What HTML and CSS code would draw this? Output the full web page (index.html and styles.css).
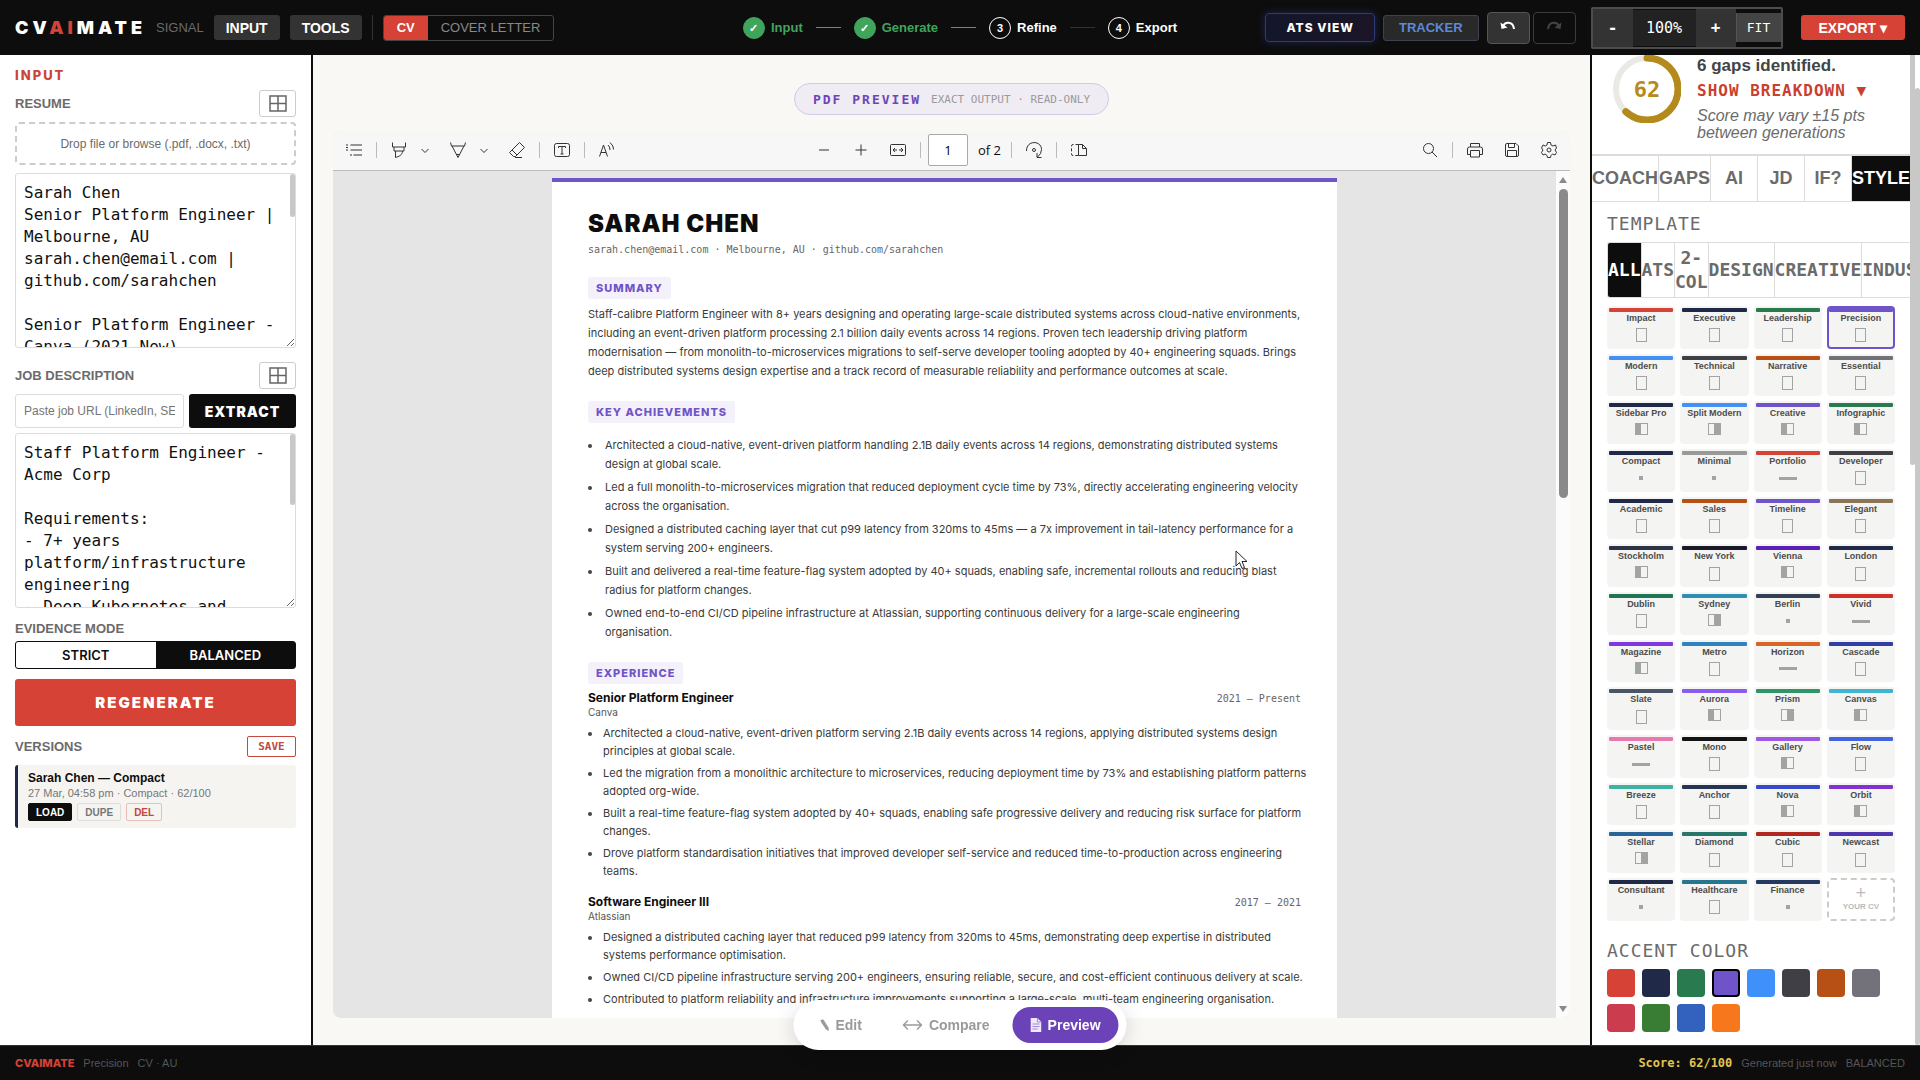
FILE: index.html
```
<!DOCTYPE html>
<html lang="en">
<head>
    <meta charset="UTF-8">
    <meta name="viewport" content="width=device-width, initial-scale=1.0">
    <title>CVAIMATE</title>
    <link rel="stylesheet" href="styles.css">
</head>
<body>
<header class="topbar">
    <div class="topbar-left">
        <div class="logo">CV<span>AI</span>MATE</div>
        <span class="signal">SIGNAL</span>
        <button class="top-btn">INPUT</button>
        <button class="top-btn">TOOLS</button>
        <span class="top-divider"></span>
        <div class="doc-toggle">
            <button class="active">CV</button>
            <button>COVER LETTER</button>
        </div>
    </div>
    <ol class="steps">
        <li class="step done"><span class="dot">✓</span>Input</li>
        <li class="step-line done"></li>
        <li class="step done"><span class="dot">✓</span>Generate</li>
        <li class="step-line done"></li>
        <li class="step"><span class="dot">3</span>Refine</li>
        <li class="step-line"></li>
        <li class="step"><span class="dot">4</span>Export</li>
    </ol>
    <div class="topbar-right">
        <button class="ats-btn">ATS VIEW</button>
        <button class="tracker-btn">TRACKER</button>
        <div class="history">
            <button aria-label="Undo"><svg width="18" height="12" viewBox="0 0 18 12"><path d="M4 6 C6 1.5 14 1 15 9" fill="none" stroke="currentColor" stroke-width="2"/><path d="M1.500 2.500 L2.500 9 L8.500 7.500 Z" fill="currentColor"/></svg></button>
            <button aria-label="Redo" disabled><svg width="18" height="12" viewBox="0 0 18 12"><path d="M14 6 C12 1.500 4 1 3 9" fill="none" stroke="currentColor" stroke-width="2"/><path d="M16.500 2.500 L15.500 9 L9.500 7.500 Z" fill="currentColor"/></svg></button>
        </div>
        <div class="zoom">
            <button>-</button>
            <span class="zoom-value">100%</span>
            <button>+</button>
            <button class="fit">FIT</button>
        </div>
        <button class="export-btn">EXPORT ▾</button>
    </div>
</header>

<main class="workspace">
    <aside class="input-panel">
        <h2 class="panel-title">INPUT</h2>
        <div class="field-head">
            <label for="resume">RESUME</label>
            <button class="grid-btn" aria-label="Expand resume"><svg width="18" height="17" viewBox="0 0 18 17"><path d="M1 1H17V16H1ZM9 1V16M1 8.500H17" fill="none" stroke="currentColor" stroke-width="1.500"/></svg></button>
        </div>
        <button class="dropzone">Drop file or browse (.pdf, .docx, .txt)</button>
        <div class="text-wrap">
            <textarea id="resume">Sarah Chen
Senior Platform Engineer | Melbourne, AU
sarah.chen@email.com | github.com/sarahchen

Senior Platform Engineer - Canva (2021-Now)</textarea>
            <span class="thumb thumb-short"></span>
        </div>
        <div class="field-head field-head-job">
            <label for="job">JOB DESCRIPTION</label>
            <button class="grid-btn" aria-label="Expand job description"><svg width="18" height="17" viewBox="0 0 18 17"><path d="M1 1H17V16H1ZM9 1V16M1 8.500H17" fill="none" stroke="currentColor" stroke-width="1.500"/></svg></button>
        </div>
        <div class="url-row">
            <input type="text" aria-label="Job URL" placeholder="Paste job URL (LinkedIn, SEEK)">
            <button>EXTRACT</button>
        </div>
        <div class="text-wrap">
            <textarea id="job">Staff Platform Engineer - Acme Corp

Requirements:
- 7+ years platform/infrastructure engineering
- Deep Kubernetes and distributed systems</textarea>
            <span class="thumb thumb-long"></span>
        </div>
        <h3 class="label evidence-label">EVIDENCE MODE</h3>
        <div class="evidence">
            <button>STRICT</button>
            <button class="active">BALANCED</button>
        </div>
        <button class="regenerate">REGENERATE</button>
        <div class="versions-head">
            <h3 class="label">VERSIONS</h3>
            <button class="save-btn">SAVE</button>
        </div>
        <div class="version">
            <div class="version-name">Sarah Chen — Compact</div>
            <div class="version-meta">27 Mar, 04:58 pm · Compact · 62/100</div>
            <div class="version-actions">
                <button class="load">LOAD</button>
                <button>DUPE</button>
                <button class="del">DEL</button>
            </div>
        </div>
    </aside>

    <section class="preview">
        <div class="preview-pill">PDF PREVIEW <span>EXACT OUTPUT · READ-ONLY</span></div>
        <div class="viewer">
            <div class="pdf-toolbar">
                <div class="tools">
                    <button aria-label="Contents"><svg viewBox="0 0 16 16"><path d="M4.500 3H16M4.500 8H16M7.500 13H16M0 3H2M0 8H2M4 13H6M0 5.500H2"/></svg></button>
                    <span class="sep"></span>
                    <button aria-label="Highlight"><svg viewBox="0 0 16 16"><path d="M1.500 0.500V5H14.500V0.500M3 5V9H13V5M4.500 9V15.500C8 14.500 11.500 13 11.500 9"/></svg></button>
                    <button class="chev" aria-label="Highlight colours"><svg viewBox="0 0 8 16"><path d="M0.500 7L4 10.500L7.500 7"/></svg></button>
                    <button aria-label="Draw"><svg viewBox="0 0 16 16"><path d="M0.500 0.500L1.500 4H14.500L15.500 0.500M2 4L8 15.500L14 4M6.500 12.500H9.500"/></svg></button>
                    <button class="chev" aria-label="Pen options"><svg viewBox="0 0 8 16"><path d="M0.500 7L4 10.500L7.500 7"/></svg></button>
                    <button aria-label="Erase"><svg viewBox="0 0 16 16"><path d="M10.500 0.500L15.500 5.500L6.500 14.500H4.500L0.500 10.500ZM3 8L8 13M6 15.500H13"/></svg></button>
                    <span class="sep"></span>
                    <button aria-label="Add text"><svg viewBox="0 0 16 16"><rect x="0.500" y="1.500" width="15" height="13" rx="2"/><path d="M4.500 6V4.500H11.500V6M8 4.500V12M6.500 12H9.500"/></svg></button>
                    <span class="sep"></span>
                    <button aria-label="Read aloud"><svg viewBox="0 0 16 16"><path d="M0.500 14.500L4.500 3L8.500 14.500M2 10.500H7M9 3Q11 4.500 11 8M11 0.500Q15 4 14.500 7.500"/></svg></button>
                </div>
                <div class="tools">
                    <button aria-label="Zoom out"><svg viewBox="0 0 16 16"><path d="M3 8H13"/></svg></button>
                    <button aria-label="Zoom in"><svg viewBox="0 0 16 16"><path d="M2.500 8H13.500M8 2.500V13.500"/></svg></button>
                    <button aria-label="Fit width"><svg viewBox="0 0 16 16"><rect x="0.500" y="2.500" width="15" height="11" rx="1"/><path d="M3 8H7M9 8H13M5 6L3 8L5 10M11 6L13 8L11 10"/></svg></button>
                    <span class="sep"></span>
                    <input class="page-input" type="text" value="1" aria-label="Page">
                    <span class="page-total">of 2</span>
                    <span class="sep"></span>
                    <button aria-label="Rotate"><svg viewBox="0 0 16 16"><path d="M0.500 9C0 -2 15.500 -2 15.500 7.500Q15.500 12 11.500 15M11 11V15.500H15.500"/><circle cx="8" cy="8" r="1.500"/></svg></button>
                    <span class="sep"></span>
                    <button aria-label="Page view"><svg viewBox="0 0 16 16"><path d="M7.500 2.500H11.500L15.500 6.500V13.500H7.500ZM11.500 2.500V6.500H15.500"/><path d="M7.500 2.500H2Q0.500 2.500 0.500 4V12Q0.500 13.500 2 13.500H7.500" stroke-dasharray="3 2"/></svg></button>
                </div>
                <div class="tools tools-right">
                    <button aria-label="Search"><svg viewBox="0 0 16 16"><circle cx="6.500" cy="6.500" r="5"/><path d="M10 10L15 15"/></svg></button>
                    <span class="sep"></span>
                    <button aria-label="Print"><svg viewBox="0 0 16 16"><path d="M3.500 5V1.500H12.500V5M3.500 12.500H0.500V7Q0.500 5 2.500 5H13.500Q15.500 5 15.500 7V12.500H12.500M3.500 8.500H12.500V15H3.500Z"/></svg></button>
                    <button aria-label="Save"><svg viewBox="0 0 16 16"><path d="M1.500 3Q1.500 1.500 3 1.500H12L14.500 4V13Q14.500 14.500 13 14.500H3Q1.500 14.500 1.500 13ZM4.500 1.500V5.500H10.500V1.500M3.500 14.500V8.500H12.500V14.500"/></svg></button>
                    <button aria-label="Settings"><svg viewBox="0 0 16 16"><path d="M6.500 0.500H9.500L10 3L12 4L14.500 3L15.500 6L14 8L15.500 10.500L14 13L11.500 12L10 13.500L9.500 15.500H6.500L6 13.500L4 12L2 13L0.500 10.500L2 8L0.500 6L2 3L4.500 4L6 3Z"/><circle cx="8" cy="8" r="2"/></svg></button>
                </div>
            </div>
            <div class="pdf-body">
                <article class="page">
                    <h1>SARAH CHEN</h1>
                    <p class="contact">sarah.chen@email.com · Melbourne, AU · github.com/sarahchen</p>
                    <h2>SUMMARY</h2>
                    <p class="summary">Staff-calibre Platform Engineer with 8+ years designing and operating large-scale distributed systems across cloud-native environments, including an event-driven platform processing 2.1 billion daily events across 14 regions. Proven tech leadership driving platform modernisation — from monolith-to-microservices migrations to self-serve developer tooling adopted by 40+ engineering squads. Brings deep distributed systems design expertise and a track record of measurable reliability and performance outcomes at scale.</p>
                    <h2>KEY ACHIEVEMENTS</h2>
                    <ul class="achievements">
                        <li>Architected a cloud-native, event-driven platform handling 2.1B daily events across 14 regions, demonstrating distributed systems design at global scale.</li>
                        <li>Led a full monolith-to-microservices migration that reduced deployment cycle time by 73%, directly accelerating engineering velocity across the organisation.</li>
                        <li>Designed a distributed caching layer that cut p99 latency from 320ms to 45ms — a 7x improvement in tail-latency performance for a system serving 200+ engineers.</li>
                        <li>Built and delivered a real-time feature-flag system adopted by 40+ squads, enabling safe, incremental rollouts and reducing blast radius for platform changes.</li>
                        <li>Owned end-to-end CI/CD pipeline infrastructure at Atlassian, supporting continuous delivery for a large-scale engineering organisation.</li>
                    </ul>
                    <h2>EXPERIENCE</h2>
                    <div class="job">
                        <div class="job-head"><h3>Senior Platform Engineer</h3><span>2021 – Present</span></div>
                        <p class="company">Canva</p>
                        <ul>
                            <li>Architected a cloud-native, event-driven platform serving 2.1B daily events across 14 regions, applying distributed systems design principles at global scale.</li>
                            <li>Led the migration from a monolithic architecture to microservices, reducing deployment time by 73% and establishing platform patterns adopted org-wide.</li>
                            <li>Built a real-time feature-flag system adopted by 40+ squads, enabling safe progressive delivery and reducing risk surface for platform changes.</li>
                            <li>Drove platform standardisation initiatives that improved developer self-service and reduced time-to-production across engineering teams.</li>
                        </ul>
                    </div>
                    <div class="job">
                        <div class="job-head"><h3>Software Engineer III</h3><span>2017 – 2021</span></div>
                        <p class="company">Atlassian</p>
                        <ul>
                            <li>Designed a distributed caching layer that reduced p99 latency from 320ms to 45ms, demonstrating deep expertise in distributed systems performance optimisation.</li>
                            <li>Owned CI/CD pipeline infrastructure serving 200+ engineers, ensuring reliable, secure, and cost-efficient continuous delivery at scale.</li>
                            <li>Contributed to platform reliability and infrastructure improvements supporting a large-scale, multi-team engineering organisation.</li>
                        </ul>
                    </div>
                </article>
                <div class="pdf-scroll">
                    <span class="arrow-up"></span>
                    <span class="pdf-thumb"></span>
                    <span class="arrow-down"></span>
                </div>
            </div>
        </div>
    </section>

    <aside class="style-panel">
        <div class="panel-scroll">
            <div class="score">
                <svg class="ring" width="68" height="68" viewBox="0 0 68 68">
                    <circle cx="34" cy="34" r="31" fill="none" stroke="#ebe9e4" stroke-width="6"/>
                    <circle cx="34" cy="34" r="31" fill="none" stroke="#b48a1c" stroke-width="7" stroke-linecap="round" pathLength="100" stroke-dasharray="62 100" transform="rotate(-90 34 34)"/>
                    <text x="34" y="42" text-anchor="middle">62</text>
                </svg>
                <div class="score-text">
                    <p class="gaps">6 gaps identified.</p>
                    <button>SHOW BREAKDOWN ▼</button>
                    <p class="note">Score may vary ±15 pts between generations</p>
                </div>
            </div>
            <nav class="tabs">
                <button>COACH</button>
                <button>GAPS</button>
                <button>AI</button>
                <button>JD</button>
                <button>IF?</button>
                <button class="active">STYLE</button>
            </nav>
            <div class="style-body">
                <h3 class="style-title">TEMPLATE</h3>
                <div class="filters">
                    <button class="active">ALL</button>
                    <button>ATS</button>
                    <button>2-<br>COL</button>
                    <button>DESIGN</button>
                    <button>CREATIVE</button>
                    <button>INDUSTRY</button>
                </div>
                <div class="templates" id="templates"></div>
                <h3 class="style-title accent-title">ACCENT COLOR</h3>
                <div class="swatches" id="swatches"></div>
            </div>
        </div>
        <div class="inner-track"><span></span></div>
        <div class="outer-track"><span></span></div>
    </aside>
</main>

<nav class="mode-switch">
    <button><svg width="10" height="13" viewBox="0 0 10 13"><path d="M1 1L4 0.500L9 8.500L9.500 12L6.500 10.500L1.500 3Z" fill="currentColor"/></svg>Edit</button>
    <button><svg width="20" height="12" viewBox="0 0 22 12"><path d="M1 6H21M6 1L1 6L6 11M16 1L21 6L16 11" fill="none" stroke="currentColor" stroke-width="1.500"/></svg>Compare</button>
    <button class="active"><svg width="11" height="14" viewBox="0 0 11 14"><path d="M0 0H7L11 4V14H0Z" fill="#efe8fa"/><path d="M7 0V4H11M2 6H9M2 8.500H9M2 11H7" fill="none" stroke="#a58bd6"/></svg>Preview</button>
</nav>

<footer class="statusbar">
    <b>CVAIMATE</b>
    <span>Precision</span>
    <span>CV · AU</span>
    <strong>Score: 62/100</strong>
    <span>Generated just now</span>
    <span>BALANCED</span>
</footer>

<svg class="cursor" width="13" height="20" viewBox="0 0 13 20"><path d="M1 1V16L4.500 12.500L7 18.500L9.500 17.500L7 11.500H12Z" fill="#fff" stroke="#222"/></svg>

<script src="script.js"></script>
</body>
</html>
```
FILE: styles.css
```
* {
    box-sizing: border-box;
}

:root {
    --sans: "Liberation Sans", Arial, sans-serif;
    --wide: Inter, "Liberation Sans", sans-serif;
    --mono: "DejaVu Sans Mono", "Liberation Mono", monospace;
    --ink: #0d0d0d;
    --red: #d64236;
    --purple: #6f54c9;
    --line: #dedcd8;
}

body {
    margin: 0;
    height: 100vh;
    display: flex;
    flex-direction: column;
    overflow: hidden;
    font-family: var(--sans);
    font-size: 12px;
    color: var(--ink);
    background: #fff;
}

h1, h2, h3, p, ul, ol {
    margin: 0;
    padding: 0;
}

button {
    font-family: inherit;
    padding: 0;
    border: none;
    background: none;
    color: inherit;
    cursor: pointer;
}

/* top bar */
.topbar {
    height: 55px;
    flex: none;
    display: grid;
    grid-template-columns: 1fr auto 1fr;
    align-items: center;
    padding: 0 15px;
    background: var(--ink);
    color: #fff;
}

.topbar-left, .topbar-right {
    display: flex;
    align-items: center;
    gap: 10px;
}

.topbar-right {
    justify-content: flex-end;
    gap: 8px;
}

.logo {
    font: 900 18px/24px var(--wide);
    letter-spacing: 4px;
}

.logo span {
    color: var(--red);
}

.signal {
    font-size: 13px;
    color: #6a6a6a;
}

.top-btn {
    height: 25px;
    padding: 0 12px;
    border-radius: 3px;
    background: #333;
    font-size: 14px;
    font-weight: bold;
}

.top-divider {
    width: 1px;
    height: 25px;
    background: #333;
}

.doc-toggle {
    height: 26px;
    display: flex;
    border: 1px solid #444;
    border-radius: 3px;
    overflow: hidden;
}

.doc-toggle button {
    padding: 0 13px;
    font-size: 13px;
    color: #888;
}

.doc-toggle .active {
    background: var(--red);
    color: #fff;
    font-weight: bold;
}

.steps {
    display: flex;
    align-items: center;
    gap: 13px;
    list-style: none;
}

.step {
    display: flex;
    align-items: center;
    gap: 6px;
    font-size: 13px;
    font-weight: bold;
}

.dot {
    width: 22px;
    height: 22px;
    border: 1px solid #fff;
    border-radius: 50%;
    font-size: 11px;
    line-height: 20px;
    text-align: center;
}

.step.done {
    color: #3fa55c;
}

.done .dot {
    background: #3fa55c;
    border-color: #3fa55c;
    color: #fff;
}

.step-line {
    width: 25px;
    height: 1px;
    background: #333;
}

.step-line.done {
    background: #3fa55c;
}

.ats-btn {
    height: 29px;
    padding: 0 20px;
    border: 1px solid #2b3c78;
    border-radius: 4px;
    background: linear-gradient(135deg, #12172b, #1c1426);
    box-shadow: 0 0 8px #1c2650;
    font: 800 12px var(--wide);
    letter-spacing: 1px;
}

.tracker-btn {
    height: 26px;
    padding: 0 15px;
    border: 1px solid #3c4254;
    border-radius: 3px;
    background: #292929;
    color: #5b8ad6;
    font-size: 13px;
    font-weight: bold;
}

.history {
    display: flex;
    gap: 3px;
}

.history button {
    width: 43px;
    height: 32px;
    border: 1px solid #555;
    border-radius: 4px;
    background: #333;
}

.history button:disabled {
    border-color: #3c3c3c;
    background: var(--ink);
    color: #444;
}

.zoom {
    display: flex;
    align-items: center;
    height: 42px;
    margin: 0 10px 0 7px;
    border: 2px solid #4c4c4c;
    border-radius: 2px;
    font-family: var(--mono);
}

.zoom button {
    width: 40px;
    align-self: stretch;
    background: #333;
    font-size: 16px;
    font-weight: bold;
}

.zoom-value {
    width: 63px;
    height: 36px;
    background: #222;
    font-size: 15px;
    line-height: 36px;
    text-align: center;
}

.zoom .fit {
    width: 45px;
    height: 29px;
    align-self: center;
    background: #444;
    border-left: 1px solid #555;
    font-size: 13px;
    font-weight: normal;
}

.export-btn {
    height: 25px;
    padding: 0 18px;
    border-radius: 3px;
    background: var(--red);
    font-size: 14px;
    font-weight: bold;
}

.workspace {
    flex: 1;
    min-height: 0;
    display: flex;
}

/* input panel */
.input-panel {
    width: 313px;
    flex: none;
    display: flex;
    flex-direction: column;
    padding: 11px 15px;
    border-right: 2px solid var(--ink);
}

.panel-title {
    height: 20px;
    color: #cc4438;
    font: 800 13px/18px var(--wide);
    letter-spacing: 2px;
}

.field-head, .versions-head {
    display: flex;
    align-items: center;
    justify-content: space-between;
    margin-top: 4px;
}

.field-head-job {
    margin-top: 14px;
}

.field-head label, .label {
    font-size: 13px;
    font-weight: bold;
    color: #6b6b6b;
}

.grid-btn {
    width: 37px;
    height: 27px;
    display: grid;
    place-items: center;
    border: 1px solid #ccc;
    border-radius: 3px;
    color: #666;
}

.dropzone {
    height: 43px;
    margin: 5px 0 8px;
    border: 2px dashed #ccc;
    border-radius: 4px;
    color: #6b6b6b;
    font-size: 12px;
}

.text-wrap {
    position: relative;
    height: 175px;
}

.text-wrap textarea {
    display: block;
    width: 100%;
    height: 100%;
    padding: 8px;
    border: 1px solid var(--line);
    border-radius: 3px;
    overflow: hidden;
    resize: vertical;
    color: #111;
    font: 16px/22px var(--mono);
}

.thumb {
    position: absolute;
    top: 1px;
    right: 1px;
    width: 5px;
    border-radius: 3px;
    background: #c8c8c8;
}

.thumb-short {
    height: 43px;
}

.thumb-long {
    height: 71px;
}

.url-row {
    display: flex;
    gap: 5px;
    height: 34px;
    margin: 5px 0;
}

.url-row input {
    flex: 1;
    min-width: 0;
    padding: 0 8px;
    border: 1px solid var(--line);
    border-radius: 3px;
    font: 12px var(--sans);
}

.url-row input::placeholder {
    color: #757575;
}

.url-row button {
    width: 107px;
    border-radius: 3px;
    background: var(--ink);
    color: #fff;
    font: 900 14px var(--wide);
    letter-spacing: 1px;
}

.evidence-label {
    margin-top: 13px;
    line-height: 16px;
}

.evidence {
    display: flex;
    height: 28px;
    margin: 4px 0 10px;
    border: 1px solid var(--ink);
    border-radius: 3px;
}

.evidence button {
    flex: 1;
    font: 600 13px var(--wide);
}

.evidence .active {
    background: var(--ink);
    color: #fff;
}

.regenerate {
    height: 47px;
    border-radius: 3px;
    background: var(--red);
    color: #fff;
    font: 900 15px var(--wide);
    letter-spacing: 2px;
}

.versions-head {
    margin-top: 10px;
}

.save-btn {
    width: 49px;
    height: 21px;
    border: 1px solid #c04a40;
    border-radius: 2px;
    color: #c04a40;
    font: bold 11px var(--mono);
}

.version {
    margin-top: 8px;
    padding: 6px 10px 7px;
    border-left: 3px solid #202a48;
    border-radius: 3px;
    background: #f5f4f1;
}

.version-name {
    font-size: 12px;
    line-height: 15px;
    font-weight: bold;
}

.version-meta {
    font-size: 11px;
    line-height: 14px;
    color: #777;
}

.version-actions {
    display: flex;
    gap: 5px;
    margin-top: 3px;
}

.version-actions button {
    height: 18px;
    padding: 0 7px;
    border: 1px solid #ddd;
    border-radius: 2px;
    color: #777;
    font-size: 10px;
    font-weight: bold;
}

.version-actions .load {
    border-color: var(--ink);
    background: var(--ink);
    color: #fff;
}

.version-actions .del {
    border-color: #ebbdb8;
    color: #c04a40;
}

/* pdf preview */
.preview {
    flex: 1;
    min-width: 0;
    display: flex;
    flex-direction: column;
    align-items: center;
    padding: 28px 20px 27px;
    background: #faf8f4;
}

.preview-pill {
    height: 32px;
    display: flex;
    align-items: center;
    gap: 10px;
    padding: 0 18px;
    border: 1px solid #d3cae6;
    border-radius: 16px;
    background: #efecf4;
    color: #6b46b8;
    font: bold 13px var(--mono);
    letter-spacing: 2px;
}

.preview-pill span {
    color: #9a9a9a;
    font-size: 11px;
    font-weight: normal;
    letter-spacing: 0;
}

.viewer {
    align-self: stretch;
    flex: 1;
    min-height: 0;
    display: flex;
    flex-direction: column;
    margin-top: 16px;
    border-radius: 8px;
    overflow: hidden;
    background: #e5e5e5;
}

.pdf-toolbar {
    height: 40px;
    flex: none;
    display: grid;
    grid-template-columns: 1fr auto 1fr;
    align-items: center;
    padding: 0 6px 2px;
    border-bottom: 1px solid #bbb;
    background: #f7f7f7;
}

.tools {
    display: flex;
    align-items: center;
    gap: 7px;
}

.tools-right {
    justify-content: flex-end;
}

.tools button {
    height: 30px;
    padding: 0 7px;
}

.tools svg {
    display: block;
    height: 16px;
    fill: none;
    stroke: #333;
}

.tools .chev {
    padding: 0 7px 0 0;
}

.chev svg {
    width: 8px;
}

.sep {
    width: 1px;
    height: 16px;
    background: #bbb;
}

.page-input {
    width: 40px;
    height: 32px;
    border: 1px solid #aaa;
    border-radius: 2px;
    background: #fff;
    text-align: center;
    font: 13px "Open Sans", sans-serif;
}

.page-total {
    margin: 0 3px;
    font: 13px "Open Sans", sans-serif;
}

.pdf-body {
    flex: 1;
    min-height: 0;
    display: flex;
    overflow: hidden;
}

.page {
    width: 785px;
    height: 1110px;
    margin: 7px auto 0;
    padding: 30px 36px;
    border-top: 4px solid var(--purple);
    background: #fff;
    color: #3a3a3a;
    font: 11px/19px Inter, sans-serif;
}

.page h1 {
    color: #0d0d0d;
    font-size: 24px;
    line-height: 24px;
    font-weight: 900;
    letter-spacing: 1px;
}

.contact {
    margin: 6px 0 19px;
    color: #666;
    font: 10px/16px var(--mono);
}

.page h2 {
    width: fit-content;
    padding: 0 8px;
    border-radius: 3px;
    background: #f4f1fb;
    color: var(--purple);
    font-size: 11px;
    font-weight: 800;
    line-height: 22px;
    letter-spacing: 1px;
}

.summary {
    margin: 6px 0 20px;
}

.page ul {
    list-style: none;
}

.page li {
    position: relative;
    padding-left: 15px;
    margin-bottom: 4px;
    line-height: 18px;
}

.page li::before {
    content: "";
    position: absolute;
    left: 0;
    top: 8px;
    width: 4px;
    height: 4px;
    border-radius: 50%;
    background: #444;
}

.page .achievements {
    margin: 13px 0 20px;
}

.page .achievements li {
    padding-left: 17px;
    line-height: 19px;
}

.job {
    margin: 6px 0 14px;
}

/* bullets run a little past the date column */
.job ul {
    margin-right: -10px;
}

.job-head {
    display: flex;
    justify-content: space-between;
    align-items: center;
    line-height: 16px;
}

.job-head h3 {
    color: #0d0d0d;
    font-size: 12px;
    font-weight: 700;
}

.job-head span {
    color: #666;
    font: 10px var(--mono);
}

.company {
    margin-bottom: 6px;
    color: #555;
    font-size: 10px;
    line-height: 12px;
}

.pdf-scroll {
    width: 14px;
    display: flex;
    flex-direction: column;
    align-items: center;
    padding: 6px 0;
    background: #fbfbfb;
}

.arrow-up, .arrow-down {
    border: 4px solid transparent;
    border-bottom: 6px solid #8a8a8a;
    border-top: 0;
}

.arrow-down {
    margin-top: auto;
    border-top: 6px solid #8a8a8a;
    border-bottom: 0;
}

.pdf-thumb {
    width: 9px;
    height: 37%;
    margin-top: 6px;
    border-radius: 5px;
    background: #8a8a8a;
}

.mode-switch {
    position: fixed;
    left: 50%;
    bottom: 30px;
    transform: translateX(-50%);
    z-index: 2;
    display: flex;
    gap: 5px;
    padding: 7px 8px;
    border-radius: 25px;
    background: #fff;
    box-shadow: 0 4px 20px rgba(0, 0, 0, 0.15);
}

.mode-switch button {
    height: 36px;
    display: flex;
    align-items: center;
    gap: 6px;
    padding: 0 18px;
    border-radius: 18px;
    color: #9a9a9a;
    font-size: 14px;
    font-weight: bold;
}

.mode-switch .active {
    background: #6b42b8;
    color: #fff;
}

/* style panel */
.style-panel {
    width: 330px;
    flex: none;
    display: flex;
    border-left: 2px solid var(--ink);
}

.panel-scroll {
    flex: 1;
    min-width: 0;
    overflow: hidden;
}

.score {
    display: flex;
    gap: 16px;
    padding: 0 15px 13px 21px;
    border-bottom: 2px solid var(--line);
}

.ring {
    flex: none;
}

.ring text {
    fill: #b48a1c;
    font: bold 22px var(--mono);
}

.gaps {
    font-size: 17px;
    line-height: 22px;
    font-weight: bold;
    color: #444;
}

.score-text button {
    height: 24px;
    margin: 2px 0 4px;
    color: #c8402f;
    font: bold 16px/24px var(--mono);
    letter-spacing: 1px;
    white-space: nowrap;
}

.note {
    font-size: 16px;
    line-height: 17px;
    font-style: italic;
    color: #6b6b6b;
}

.tabs {
    display: flex;
    height: 46px;
    border-bottom: 1px solid var(--line);
}

.tabs button {
    flex: 1 1 0;
    border-right: 1px solid var(--line);
    color: #6b6b6b;
    font-size: 18px;
    font-weight: bold;
}

.tabs .active {
    background: var(--ink);
    color: #fff;
    border-right: none;
}

.style-body {
    padding: 11px 15px;
}

.style-title {
    color: #6b6b6b;
    font: 18px/22px var(--mono);
    letter-spacing: 1px;
}

.filters {
    display: flex;
    height: 56px;
    margin: 7px -15px 8px 0;
    border: 1px solid var(--line);
    border-right: none;
    border-radius: 3px 0 0 3px;
    overflow: hidden;
}

.filters button {
    flex: none;
    border-right: 1px solid var(--line);
    color: #6b6b6b;
    font: bold 18px/24px var(--mono);
}

.filters .active {
    background: var(--ink);
    color: #fff;
}

.templates {
    display: grid;
    grid-template-columns: repeat(4, 1fr);
    gap: 5px;
}

.template {
    aspect-ratio: 8 / 5;
    min-width: 0;
    display: flex;
    flex-direction: column;
    align-items: center;
    border: 2px solid transparent;
    border-radius: 4px;
    background: #f4f4f2;
    color: #4c4c4c;
    font-size: 9px;
    line-height: 12px;
    font-weight: bold;
    white-space: nowrap;
}

.template.selected {
    border-color: var(--purple);
}

.bar {
    width: 100%;
    height: 4px;
    flex: none;
    border-radius: 1px;
}

.glyph {
    margin: auto;
    border: 1px solid #a3a3a3;
}

.glyph.doc {
    width: 11px;
    height: 14px;
}

.glyph.left, .glyph.right {
    width: 13px;
    height: 12px;
    margin-top: 4px;
    background: linear-gradient(90deg, #a3a3a3 50%, transparent 50%);
}

.glyph.right {
    background: linear-gradient(90deg, transparent 50%, #a3a3a3 50%);
}

.glyph.small {
    width: 4px;
    height: 4px;
    background: #a3a3a3;
}

.glyph.dash {
    width: 18px;
    height: 3px;
    background: #a3a3a3;
}

.template.custom {
    justify-content: center;
    border: 2px dashed #ccc;
    background: #fff;
    color: #bbb;
    font-size: 8px;
}

.custom span {
    font: 18px/15px var(--sans);
}

.accent-title {
    margin-top: 19px;
}

.swatches {
    display: flex;
    flex-wrap: wrap;
    gap: 7px;
    margin-top: 7px;
}

.swatch {
    width: 28px;
    height: 28px;
    border-radius: 4px;
}

.swatch.selected {
    border: 2px solid #000;
}

.inner-track, .outer-track {
    width: 5px;
}

.inner-track span, .outer-track span {
    display: block;
    height: 100%;
    border-radius: 3px;
    background: #c8c8c8;
}

.inner-track span {
    height: 410px;
    border-radius: 0 0 3px 3px;
}

.outer-track {
    padding-top: 33px;
}

/* status bar */
.statusbar {
    height: 35px;
    flex: none;
    display: flex;
    align-items: center;
    gap: 9px;
    padding: 0 15px;
    border-top: 1px solid #333;
    background: var(--ink);
    color: #555;
    font-size: 11px;
}

.statusbar b {
    color: var(--red);
    font: 800 11px var(--wide);
}

.statusbar strong {
    margin-left: auto;
    color: #e3c450;
    font: bold 12px var(--mono);
}

.cursor {
    position: absolute;
    left: 1235px;
    top: 550px;
    z-index: 3;
    pointer-events: none;
}
```
FILE: script.js
```
const templates = [
    ['Impact', '#d64236', 'doc'], ['Executive', '#202a48', 'doc'], ['Leadership', '#2a7a50', 'doc'], ['Precision', '#6f54c9', 'doc'],
    ['Modern', '#4490f5', 'doc'], ['Technical', '#403f45', 'doc'], ['Narrative', '#b65014', 'doc'], ['Essential', '#73717a', 'doc'],
    ['Sidebar Pro', '#202a48', 'left'], ['Split Modern', '#4490f5', 'right'], ['Creative', '#6f54c9', 'left'], ['Infographic', '#2a7a50', 'left'],
    ['Compact', '#202a48', 'small'], ['Minimal', '#999999', 'small'], ['Portfolio', '#d64236', 'dash'], ['Developer', '#403f45', 'doc'],
    ['Academic', '#202a48', 'doc'], ['Sales', '#b65014', 'doc'], ['Timeline', '#6f54c9', 'doc'], ['Elegant', '#8b7355', 'doc'],
    ['Stockholm', '#2d3446', 'left'], ['New York', '#1a1a28', 'doc'], ['Vienna', '#5b21b6', 'left'], ['London', '#202a48', 'doc'],
    ['Dublin', '#207554', 'doc'], ['Sydney', '#2e8fb5', 'right'], ['Berlin', '#344054', 'small'], ['Vivid', '#d03028', 'dash'],
    ['Magazine', '#7c3ae0', 'left'], ['Metro', '#3182c0', 'doc'], ['Horizon', '#d9642a', 'dash'], ['Cascade', '#2f3fa5', 'doc'],
    ['Slate', '#4a5568', 'doc'], ['Aurora', '#8b5cf0', 'left'], ['Prism', '#2f9567', 'right'], ['Canvas', '#42b4d0', 'left'],
    ['Pastel', '#e879b0', 'dash'], ['Mono', '#141414', 'doc'], ['Gallery', '#9f58e6', 'left'], ['Flow', '#4264de', 'doc'],
    ['Breeze', '#3eb3a3', 'doc'], ['Anchor', '#243556', 'doc'], ['Nova', '#3949cc', 'left'], ['Orbit', '#8433d0', 'left'],
    ['Stellar', '#2a6599', 'right'], ['Diamond', '#28756a', 'doc'], ['Cubic', '#b02820', 'doc'], ['Newcast', '#4f35ae', 'doc'],
    ['Consultant', '#202a48', 'small'], ['Healthcare', '#287590', 'doc'], ['Finance', '#25385f', 'small']
];

const colors = ['#d64236', '#202a48', '#2a7a50', '#6f54c9', '#3f90fb', '#403f45', '#b65014', '#73717a', '#cb3d4e', '#397d35', '#3262be', '#f7771c'];

const grid = document.getElementById('templates');
templates.forEach(([name, color, glyph]) => {
    const btn = document.createElement('button');
    btn.className = `template ${name === 'Precision' ? 'selected' : ''}`;
    btn.innerHTML = `<span class="bar" style="background: ${color}"></span>${name}<span class="glyph ${glyph}"></span>`;
    grid.appendChild(btn);
});

const custom = document.createElement('button');
custom.className = 'template custom';
custom.innerHTML = '<span>+</span>YOUR CV';
grid.appendChild(custom);

const swatches = document.getElementById('swatches');
colors.forEach((color, index) => {
    const btn = document.createElement('button');
    btn.className = `swatch ${index === 3 ? 'selected' : ''}`;
    btn.style.background = color;
    btn.setAttribute('aria-label', `Accent ${color}`);
    swatches.appendChild(btn);
});
```
